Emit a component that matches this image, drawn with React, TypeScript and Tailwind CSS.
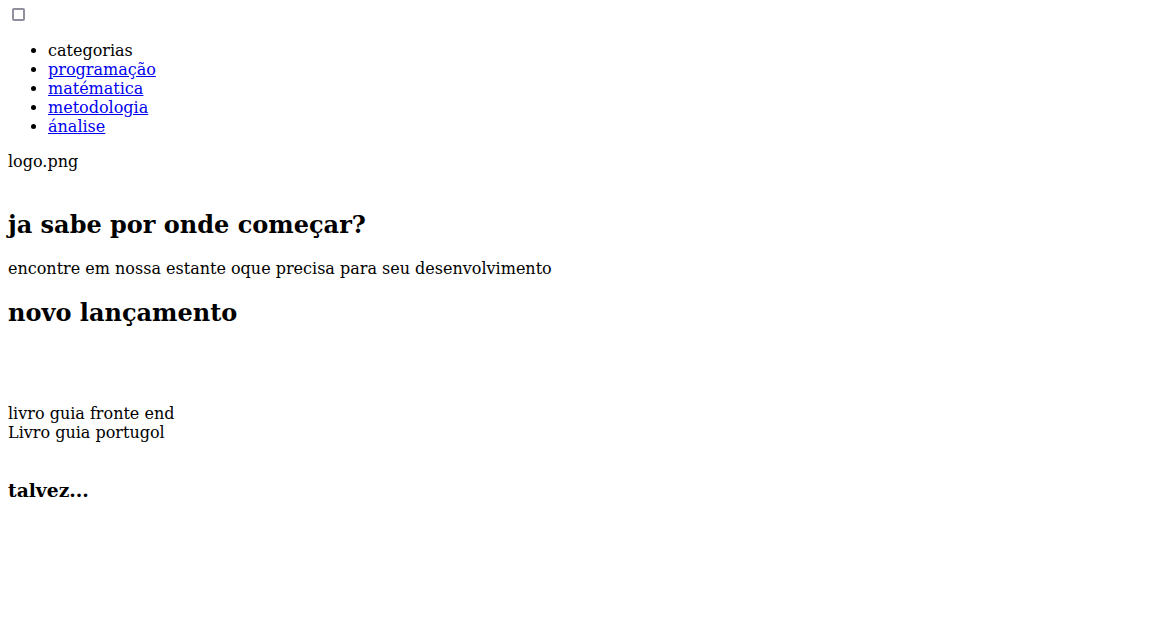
import React from 'react';

const categorias = [
  { name: 'programação', href: '#' },
  { name: 'matématica', href: '#' },
  { name: 'metodologia', href: '#' },
  { name: 'ánalise', href: '#' },
];

const App: React.FC = () => {
  return (
    <div className="min-h-screen bg-white p-2 font-['DejaVu_Serif',serif] text-base leading-[19px] text-black">
      {/* menu toggle */}
      <div className="h-[17px]">
        <input
          type="checkbox"
          className="ml-1 block h-[13px] w-[13px] appearance-none rounded-[2px] border-2 border-[#8f8f9d] bg-white"
        />
      </div>

      <ul className="my-4 list-disc pl-10">
        <li>categorias</li>
        {categorias.map((c) => (
          <li key={c.name}>
            <a href={c.href} className="text-[#0000ee] underline">
              {c.name}
            </a>
          </li>
        ))}
      </ul>

      <header className="mb-10">
        <span>logo.png</span>
      </header>

      <section>
        <h2 className="mb-5 text-2xl leading-[28px] font-bold">ja sabe por onde começar?</h2>
        <p className="my-4">encontre em nossa estante oque precisa para seu desenvolvimento</p>
      </section>

      <section>
        <h2 className="mt-[21px] text-2xl leading-[28px] font-bold">novo lançamento</h2>
        <div className="mt-[77px]">
          <div>livro guia fronte end</div>
          <div>Livro guia portugol</div>
        </div>
      </section>

      <h3 className="mt-[37px] text-[18.72px] leading-[22px] font-bold">talvez...</h3>
    </div>
  );
};

export default App;
